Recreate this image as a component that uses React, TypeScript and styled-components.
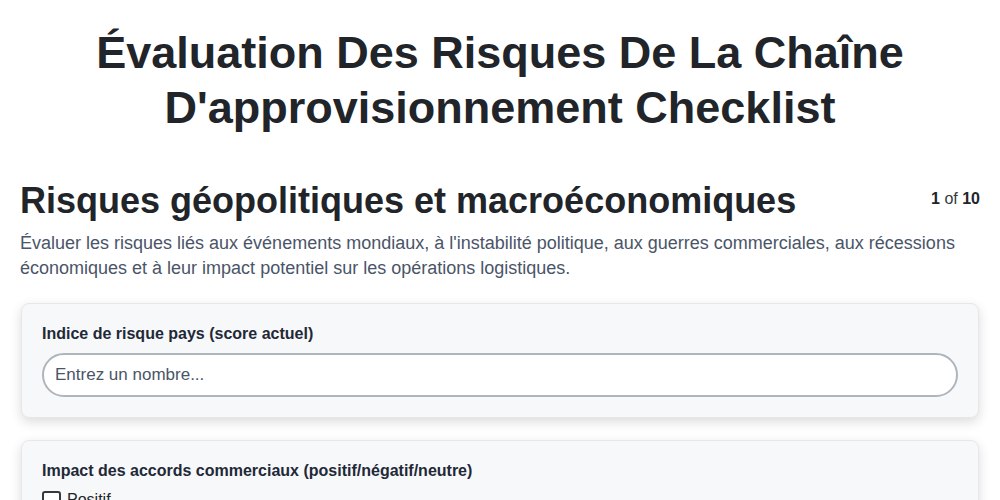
import styled, { createGlobalStyle } from "styled-components";

const GlobalStyle = createGlobalStyle`
  body {
    margin: 0;
    background: #ffffff;
    font-family: "Liberation Sans", Arial, sans-serif;
    color: #212529;
  }
`;

const options = ["Positif", "Négatif", "Neutre"];

export default function App() {
  return (
    <>
      <GlobalStyle />
      <Page>
        <Title>Évaluation Des Risques De La Chaîne D'approvisionnement Checklist</Title>
        <SectionHeader>
          <SectionTitle>Risques géopolitiques et macroéconomiques</SectionTitle>
          <Counter>
            <b>1</b> of <b>10</b>
          </Counter>
        </SectionHeader>
        <Description>
          Évaluer les risques liés aux événements mondiaux, à l'instabilité politique, aux guerres
          commerciales, aux récessions économiques et à leur impact potentiel sur les opérations
          logistiques.
        </Description>
        <Card>
          <Label htmlFor="pays">Indice de risque pays (score actuel)</Label>
          <Input id="pays" type="number" placeholder="Entrez un nombre..." />
        </Card>
        <Card>
          <Label as="div">Impact des accords commerciaux (positif/négatif/neutre)</Label>
          {options.map((o) => (
            <CheckRow key={o}>
              <Box />
              {o}
            </CheckRow>
          ))}
        </Card>
      </Page>
    </>
  );
}

const Page = styled.div`
  max-width: 960px;
  margin: 0 auto;
  padding: 25px 20px 40px;
`;

const Title = styled.h1`
  margin: 0 20px 44px;
  text-align: center;
  font-size: 45px;
  line-height: 55px;
  font-weight: 700;
  color: #212529;
`;

const SectionHeader = styled.div`
  display: flex;
  justify-content: space-between;
  align-items: flex-start;
`;

const SectionTitle = styled.h2`
  margin: 0;
  font-size: 36px;
  line-height: 43px;
  font-weight: 700;
  color: #212529;
`;

const Counter = styled.div`
  font-size: 16px;
  line-height: 20px;
  margin-top: 10px;
  color: #343a40;

  & b {
    color: #212529;
  }
`;

const Description = styled.p`
  margin: 9px 0 22px;
  font-size: 18px;
  line-height: 25px;
  color: #4a5568;
`;

const Card = styled.div`
  background: #f7f8fa;
  border: 1px solid #e5e7eb;
  border-radius: 8px;
  padding: 20px;
  margin: 0 1px 22px;
  box-shadow: 0 4px 12px rgba(0, 0, 0, 0.14);
`;

const Label = styled.label`
  display: block;
  font-size: 16px;
  line-height: 19px;
  font-weight: 700;
  color: #1f2937;
  margin-bottom: 10px;
`;

const Input = styled.input`
  box-sizing: border-box;
  width: 100%;
  height: 44px;
  border: 2px solid #adb5bd;
  border-radius: 22px;
  padding: 0 11px;
  background: #ffffff;
  font-family: "Liberation Sans", Arial, sans-serif;
  font-size: 17px;
  color: #212529;
  outline: none;
  appearance: textfield;

  &::placeholder {
    color: #4a5568;
  }
`;

const CheckRow = styled.div`
  display: flex;
  align-items: center;
  gap: 6px;
  font-size: 16px;
  line-height: 20px;
  color: #212529;
  margin-bottom: 6px;
`;

const Box = styled.span`
  display: inline-block;
  box-sizing: border-box;
  width: 19px;
  height: 19px;
  border: 2px solid #343a40;
  border-radius: 3px;
  background: #ffffff;
`;
